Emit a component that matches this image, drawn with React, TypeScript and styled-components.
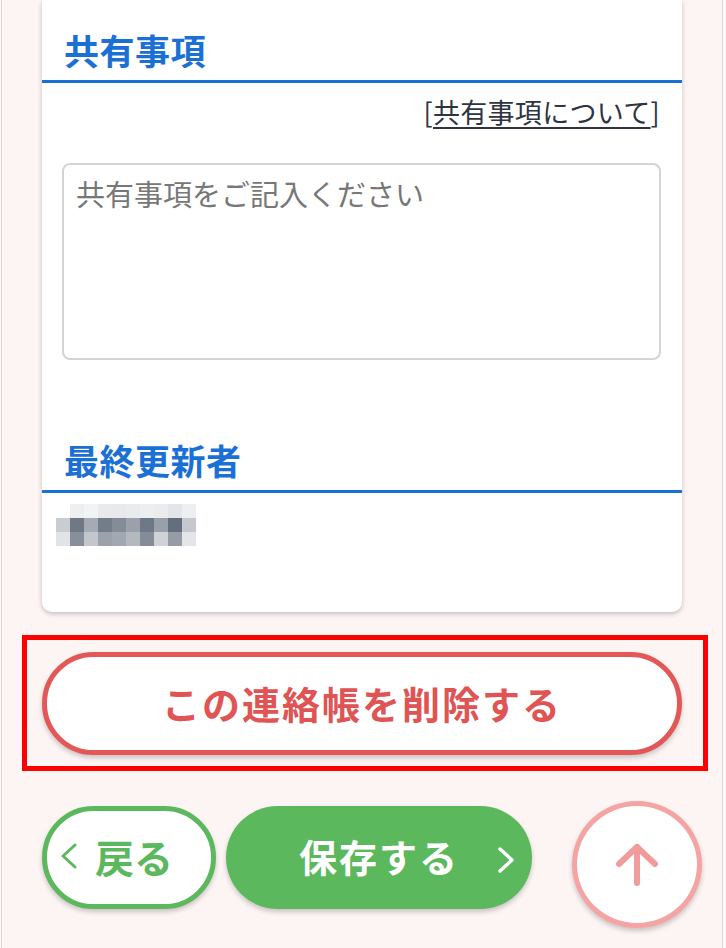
import React from "react";
import styled, { createGlobalStyle } from "styled-components";

const Global = createGlobalStyle`
  html, body { margin: 0; padding: 0; background: #fdf9f9; }
  body { font-family: "Noto Sans CJK JP", "Noto Sans", sans-serif; }
  * { box-sizing: border-box; }
`;

const Frame = styled.div`
  margin-left: 1px;
  width: 722px;
  min-height: 948px;
  background: #fdf4f4;
  border-left: 1px solid #dcd6d6;
  border-right: 1px solid #dcd6d6;
  padding-bottom: 40px;
`;

const Card = styled.div`
  margin: 0 40px;
  background: #fff;
  border-radius: 0 0 10px 10px;
  box-shadow: 0 2px 5px rgba(0, 0, 0, 0.22);
  padding: 28px 0 66px;
`;

const SectionTitle = styled.h2<{ $top?: number }>`
  margin: ${(p) => p.$top ?? 0}px 0 0;
  padding: 0 22px 8px;
  font-size: 35px;
  line-height: 44px;
  font-weight: 700;
  letter-spacing: 0.5px;
  color: #1b70d5;
  border-bottom: 3px solid #1b70d5;
`;

const LinkRow = styled.div`
  margin-top: 11px;
  padding-right: 22px;
  text-align: right;
  font-size: 27px;
  line-height: 36px;
  color: #2e3440;
  letter-spacing: 0.3px;
`;

const Link = styled.a`
  color: #2e3440;
  text-decoration: underline;
  text-decoration-thickness: 1.5px;
  text-underline-offset: 4px;
`;

const TextArea = styled.textarea`
  display: block;
  margin: 33px 21px 0 20px;
  width: 599px;
  height: 197px;
  border: 2px solid #d4d4d4;
  border-radius: 8px;
  padding: 8px 12px;
  font-family: "Noto Sans CJK JP", sans-serif;
  font-size: 29px;
  line-height: 40px;
  color: #333;
  resize: none;
  outline: none;
  &::placeholder { color: #777; }
`;

const Mosaic = styled.div`
  margin: 11px 0 0 14px;
  display: grid;
  grid-template-columns: repeat(10, 14px);
  grid-auto-rows: 14px;
  width: 140px;
`;

const Cell = styled.div<{ $c: string }>`
  background: ${(p) => p.$c};
`;

const Highlight = styled.div`
  margin: 23px 0 0 20px;
  width: 686px;
  border: 5px solid #ff0000;
  padding: 12px 21px 11px 15px;
`;

const DeleteButton = styled.button`
  display: flex;
  align-items: center;
  justify-content: center;
  width: 640px;
  height: 103px;
  background: #fff;
  border: 5px solid #e35757;
  border-radius: 52px;
  box-shadow: 0 3px 5px rgba(0, 0, 0, 0.2);
  color: #e05454;
  font-family: "Noto Sans CJK JP", sans-serif;
  font-size: 38px;
  font-weight: 700;
  letter-spacing: 2px;
  padding: 0 0 2px;
`;

const BottomRow = styled.div`
  margin: 35px 0 0 40px;
  display: flex;
  gap: 10px;
`;

const BackButton = styled.button`
  display: flex;
  align-items: center;
  justify-content: flex-start;
  gap: 17px;
  width: 174px;
  height: 103px;
  background: #fff;
  border: 5px solid #5cb85c;
  border-radius: 52px;
  box-shadow: 0 3px 5px rgba(0, 0, 0, 0.2);
  color: #5cb85c;
  font-family: "Noto Sans CJK JP", sans-serif;
  font-size: 39px;
  font-weight: 700;
  padding: 0 0 4px 13px;
`;

const SaveButton = styled.button`
  position: relative;
  display: flex;
  align-items: center;
  justify-content: center;
  width: 306px;
  height: 103px;
  background: #5cb85c;
  border: none;
  border-radius: 52px;
  box-shadow: 0 3px 5px rgba(0, 0, 0, 0.2);
  color: #fff;
  font-family: "Noto Sans CJK JP", sans-serif;
  font-size: 38px;
  font-weight: 700;
  letter-spacing: 2px;
  padding: 0 0 4px;
`;

const SaveChevron = styled.svg`
  position: absolute;
  right: 17px;
  top: 41px;
`;

const PageTop = styled.button`
  position: fixed;
  right: 24px;
  bottom: 20px;
  width: 130px;
  height: 127px;
  border-radius: 50%;
  background: #fff;
  border: 5px solid #f5a4a4;
  box-shadow: 0 3px 5px rgba(0, 0, 0, 0.2);
  display: flex;
  align-items: center;
  justify-content: center;
  padding: 0;
`;

const mosaic = [
  ["#ffffff", "#eeeff1", "#f2f3f4", "#e9eaec", "#e8e9eb", "#eaebed", "#eceef0", "#ebecee", "#e3e5e8", "#eeeff1"],
  ["#c9ccd1", "#6f7885", "#a5abb4", "#737c89", "#848c97", "#9aa1ab", "#6f7886", "#9aa0aa", "#656e7c", "#c5c9ce"],
  ["#e1e3e6", "#87909a", "#c3c7cc", "#9ca2ab", "#a2a8b1", "#b4b9c0", "#848c97", "#cfd2d6", "#959ca6", "#e3e5e8"],
];

export default function App() {
  return (
    <>
      <Global />
      <Frame>
        <Card>
          <SectionTitle>共有事項</SectionTitle>
          <LinkRow>
            [<Link>共有事項について</Link>]
          </LinkRow>
          <TextArea placeholder="共有事項をご記入ください" />
          <SectionTitle $top={78}>最終更新者</SectionTitle>
          <Mosaic>
            {mosaic.flat().map((c, i) => (
              <Cell key={i} $c={c} />
            ))}
          </Mosaic>
        </Card>
        <Highlight>
          <DeleteButton>この連絡帳を削除する</DeleteButton>
        </Highlight>
        <BottomRow>
          <BackButton>
            <svg width="18" height="26" viewBox="0 0 18 26">
              <polyline points="15,2 3,13 15,24" fill="none" stroke="#5cb85c" strokeWidth="3" strokeLinecap="round" strokeLinejoin="round" />
            </svg>
            <span>戻る</span>
          </BackButton>
          <SaveButton>
            保存する
            <SaveChevron width="18" height="26" viewBox="0 0 18 26">
              <polyline points="3,2 15,13 3,24" fill="none" stroke="#fff" strokeWidth="3.5" strokeLinecap="round" strokeLinejoin="round" />
            </SaveChevron>
          </SaveButton>
        </BottomRow>
      </Frame>
      <PageTop aria-label="page top">
        <svg width="46" height="46" viewBox="0 0 46 46">
          <g fill="none" stroke="#f29b9b" strokeWidth="6" strokeLinecap="round" strokeLinejoin="round">
            <line x1="23" y1="5" x2="23" y2="41" />
            <polyline points="5,22 23,5 41,22" />
          </g>
        </svg>
      </PageTop>
    </>
  );
}
